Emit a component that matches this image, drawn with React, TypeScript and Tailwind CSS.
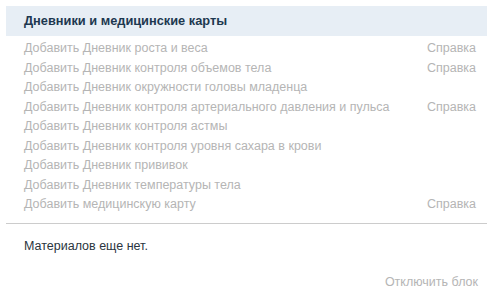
import React from 'react';

const items: { label: string; help?: boolean }[] = [
  { label: 'Добавить Дневник роста и веса', help: true },
  { label: 'Добавить Дневник контроля объемов тела', help: true },
  { label: 'Добавить Дневник окружности головы младенца' },
  { label: 'Добавить Дневник контроля артериального давления и пульса', help: true },
  { label: 'Добавить Дневник контроля астмы' },
  { label: 'Добавить Дневник контроля уровня сахара в крови' },
  { label: 'Добавить Дневник прививок' },
  { label: 'Добавить Дневник температуры тела' },
  { label: 'Добавить медицинскую карту', help: true },
];

export default function App() {
  return (
    <div className="w-[494px] h-[297px] bg-white pt-[6px] pl-[6px] pr-[7px] font-['Liberation_Sans',Arial,sans-serif] text-[12.5px]">
      <div className="h-[30px] bg-[#e7eef5] flex items-center px-[18px]">
        <h3 className="font-bold text-[12.8px] text-[#1d3850]">Дневники и медицинские карты</h3>
      </div>
      <div className="pt-[3px] pb-[8px] pl-[18px] pr-[11px] border-b border-[#cccccc]">
        {items.map((item) => (
          <div key={item.label} className="h-[19.5px] flex items-center justify-between text-[#b5b5b5]">
            <span>{item.label}</span>
            {item.help && <span>Справка</span>}
          </div>
        ))}
      </div>
      <div className="pl-[18px] pt-[13px] text-[#2a3540]">Материалов еще нет.</div>
      <div className="pr-[9px] pt-[18px] text-right text-[#b5b5b5]">Отключить блок</div>
    </div>
  );
}
